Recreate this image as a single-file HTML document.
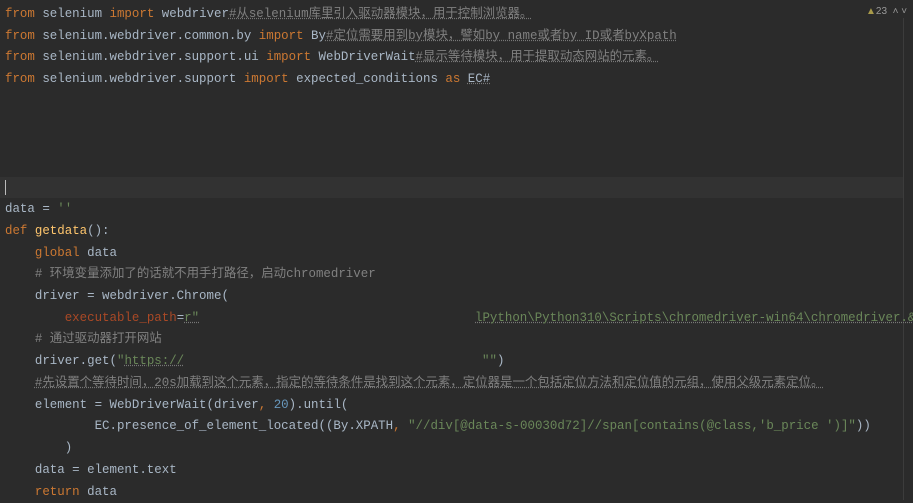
<!DOCTYPE html>
<html><head><meta charset="utf-8"><style>
body{margin:0;width:913px;height:500px;background:#2b2b2b;overflow:hidden;position:relative;font-family:"Liberation Mono","Noto Sans CJK SC",monospace;font-size:12.45px;color:#a9b7c6}
.l{position:absolute;left:5px;height:22px;line-height:22px;white-space:pre}
.k{color:#cc7832}.c{color:#808080}.s{color:#6a8759}.n{color:#6897bb}.f{color:#ffc66d}.p{color:#aa4926}
.u{text-decoration:underline dotted #777}
.cl{position:absolute;left:0;top:177px;width:903px;height:21px;background:#323232}
.sb{position:absolute;left:903px;top:18px;width:1px;height:482px;background:#3c3c3c}
</style></head><body>
<div class="cl"></div>
<div style="position:absolute;left:5px;top:180px;width:1px;height:15px;background:#bbb"></div>
<div class="sb"></div>
<div style="position:absolute;left:866px;top:6px;font-family:'Liberation Sans',sans-serif;font-size:10px;color:#999"><span style="color:#a89a4a">▲</span>23 &nbsp;˄ ˅</div>
<div class="l" style="top:3px"><span class="k">from</span> selenium <span class="k">import</span> webdriver<span class="c u">#从selenium库里引入驱动器模块，用于控制浏览器。</span></div>
<div class="l" style="top:25px"><span class="k">from</span> selenium.webdriver.common.by <span class="k">import</span> By<span class="c u">#定位需要用到by模块，譬如by name或者by ID或者byXpath</span></div>
<div class="l" style="top:46px"><span class="k">from</span> selenium.webdriver.support.ui <span class="k">import</span> WebDriverWait<span class="c u">#显示等待模块，用于提取动态网站的元素。</span></div>
<div class="l" style="top:68px"><span class="k">from</span> selenium.webdriver.support <span class="k">import</span> expected_conditions <span class="k">as</span> <span class="u">EC#</span></div>
<div class="l" style="top:198px">data = <span class="s">''</span></div>
<div class="l" style="top:220px"><span class="k">def</span> <span class="f">getdata</span>():</div>
<div class="l" style="top:242px">    <span class="k">global</span> data</div>
<div class="l" style="top:263px">    <span class="c"># 环境变量添加了的话就不用手打路径，启动chromedriver</span></div>
<div class="l" style="top:285px">    driver = webdriver.Chrome(</div>
<div class="l" style="top:307px">        <span class="p">executable_path</span>=<span class="s u">r"</span></div>
<div class="l s u" style="top:307px;left:475px">lPython\Python310\Scripts\chromedriver-win64\chromedriver.&amp;</div>
<div class="l" style="top:328px">    <span class="c"># 通过驱动器打开网站</span></div>
<div class="l" style="top:350px">    driver.get(<span class="s">"<span class="u">https://</span></span></div>
<div class="l s" style="top:350px;left:482px">""</div><div class="l" style="top:350px;left:497px">)</div>
<div class="l" style="top:372px">    <span class="c u">#先设置个等待时间，20s加载到这个元素，指定的等待条件是找到这个元素，定位器是一个包括定位方法和定位值的元组，使用父级元素定位。</span></div>
<div class="l" style="top:394px">    element = WebDriverWait(driver<span class="k">,</span> <span class="n">20</span>).until(</div>
<div class="l" style="top:415px">            EC.presence_of_element_located((By.XPATH<span class="k">,</span> <span class="s">"//div[@data-s-00030d72]//span[contains(@class,'b_price ')]"</span>))</div>
<div class="l" style="top:437px">        )</div>
<div class="l" style="top:459px">    data = element.text</div>
<div class="l" style="top:481px">    <span class="k">return</span> data</div>
</body></html>
